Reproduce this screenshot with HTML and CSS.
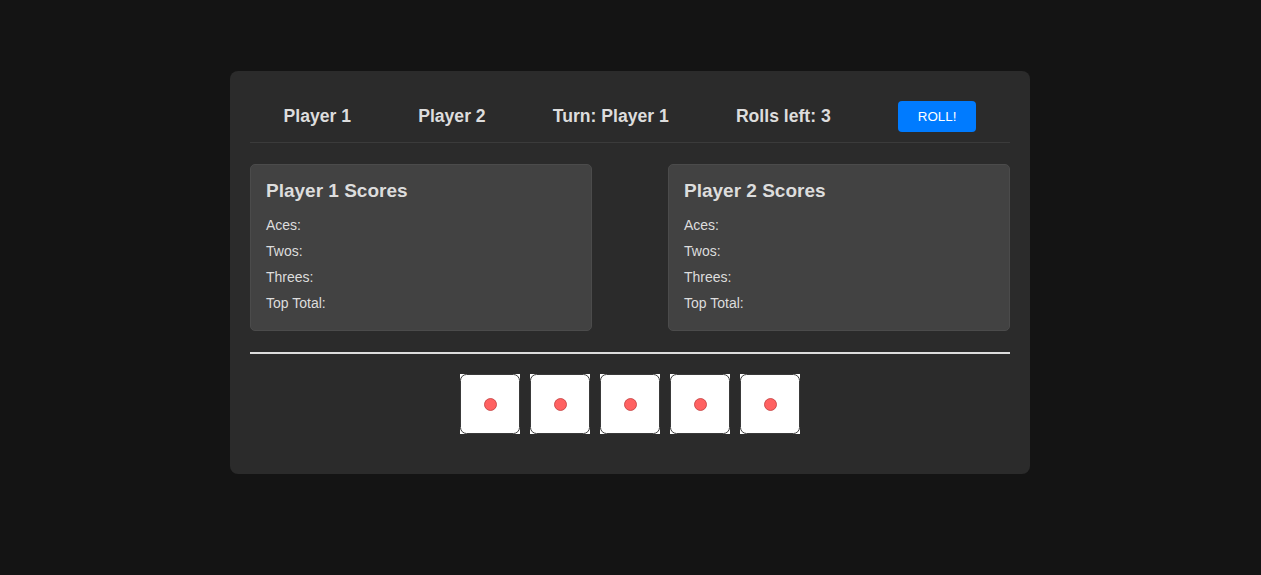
FILE: index.html
```html
<!DOCTYPE html>
<html lang="en">
<head>
<meta charset="utf-8">
<title>Yahtzee</title>
<link rel="stylesheet" href="styles.css">
</head>
<body>
<div class="game">
  <div class="topbar">
    <div class="top-item">Player 1</div>
    <div class="top-item">Player 2</div>
    <div class="top-item">Turn: Player 1</div>
    <div class="top-item">Rolls left: 3</div>
    <button class="roll-btn">ROLL!</button>
  </div>
  <div class="scores">
    <div class="score-card">
      <h3 class="score-title">Player 1 Scores</h3>
      <div class="score-row">Aces:</div>
      <div class="score-row">Twos:</div>
      <div class="score-row">Threes:</div>
      <div class="score-row">Top Total:</div>
    </div>
    <div class="score-card">
      <h3 class="score-title">Player 2 Scores</h3>
      <div class="score-row">Aces:</div>
      <div class="score-row">Twos:</div>
      <div class="score-row">Threes:</div>
      <div class="score-row">Top Total:</div>
    </div>
  </div>
  <div class="dice-area">
    <svg class="die" width="60" height="60" viewBox="0 0 60 60"><rect width="60" height="60" fill="#fff"/><rect x="0.5" y="0.5" width="59" height="59" rx="6" fill="#fff" stroke="#3a3a3a"/><circle cx="30.5" cy="30.5" r="6" fill="#ff6161" stroke="#c23a3a" stroke-width="0.8"/></svg>
    <svg class="die" width="60" height="60" viewBox="0 0 60 60"><rect width="60" height="60" fill="#fff"/><rect x="0.5" y="0.5" width="59" height="59" rx="6" fill="#fff" stroke="#3a3a3a"/><circle cx="30.5" cy="30.5" r="6" fill="#ff6161" stroke="#c23a3a" stroke-width="0.8"/></svg>
    <svg class="die" width="60" height="60" viewBox="0 0 60 60"><rect width="60" height="60" fill="#fff"/><rect x="0.5" y="0.5" width="59" height="59" rx="6" fill="#fff" stroke="#3a3a3a"/><circle cx="30.5" cy="30.5" r="6" fill="#ff6161" stroke="#c23a3a" stroke-width="0.8"/></svg>
    <svg class="die" width="60" height="60" viewBox="0 0 60 60"><rect width="60" height="60" fill="#fff"/><rect x="0.5" y="0.5" width="59" height="59" rx="6" fill="#fff" stroke="#3a3a3a"/><circle cx="30.5" cy="30.5" r="6" fill="#ff6161" stroke="#c23a3a" stroke-width="0.8"/></svg>
    <svg class="die" width="60" height="60" viewBox="0 0 60 60"><rect width="60" height="60" fill="#fff"/><rect x="0.5" y="0.5" width="59" height="59" rx="6" fill="#fff" stroke="#3a3a3a"/><circle cx="30.5" cy="30.5" r="6" fill="#ff6161" stroke="#c23a3a" stroke-width="0.8"/></svg>
  </div>
</div>
</body>
</html>
```

FILE: styles.css
```css
html, body {
  margin: 0;
  padding: 0;
}
body {
  background: #141414;
  font-family: "Liberation Sans", Arial, sans-serif;
  color: #dddddd;
  padding-top: 71px;
  padding-right: 1px;
}
.game {
  width: 800px;
  box-sizing: border-box;
  margin: 0 auto;
  background: #2b2b2b;
  border-radius: 8px;
  padding: 20px;
}
.topbar {
  display: flex;
  justify-content: space-around;
  align-items: center;
  padding: 10px 0;
  border-bottom: 1px solid #3b3b3b;
  margin-bottom: 21px;
}
.top-item {
  font-size: 17.6px;
  font-weight: bold;
  color: #dddddd;
}
.roll-btn {
  font-family: "Liberation Sans", Arial, sans-serif;
  font-size: 13.33px;
  line-height: 15px;
  color: #ffffff;
  background: #007bff;
  border: none;
  border-radius: 4px;
  padding: 8px 20px;
  height: 31px;
}
.scores {
  display: flex;
  justify-content: space-between;
}
.score-card {
  width: 45%;
  box-sizing: border-box;
  background: #424242;
  border: 1px solid #4b4b4b;
  border-radius: 5px;
  padding: 15px 15px 14px;
}
.score-title {
  margin: 0 0 11px;
  font-size: 19px;
  line-height: 21px;
  font-weight: bold;
  color: #dddddd;
}
.score-row {
  font-size: 14px;
  line-height: 16px;
  padding: 5px 0;
  color: #dddddd;
}
.dice-area {
  margin-top: 21px;
  border-top: 2px solid #dddddd;
  padding: 20px 0;
  display: flex;
  justify-content: center;
  gap: 10px;
}
.die {
  display: block;
}
```
